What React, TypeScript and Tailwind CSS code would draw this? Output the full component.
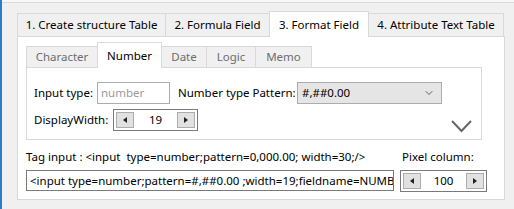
import { ChevronDown } from 'lucide-react'

function Spinner({ value, width }: { value: string; width: string }) {
  return (
    <div className={`${width} h-[22px] border border-[#7a7a7a] bg-white flex items-center justify-between px-[2px]`}>
      <div className="w-[18px] h-[16px] border border-[#adadad] bg-[#e1e1e1] flex items-center justify-center">
        <svg width="4" height="6" viewBox="0 0 4 6"><path d="M4 0 L0 3 L4 6 Z" fill="#222" /></svg>
      </div>
      <span className="text-black">{value}</span>
      <div className="w-[18px] h-[16px] border border-[#adadad] bg-[#e1e1e1] flex items-center justify-center">
        <svg width="4" height="6" viewBox="0 0 4 6"><path d="M0 0 L4 3 L0 6 Z" fill="#222" /></svg>
      </div>
    </div>
  )
}

export default function App() {
  const outerTabs = [
    { label: '1. Create structure Table', w: 'w-[149px]' },
    { label: '2. Formula Field', w: 'w-[105px]' },
    { label: '3. Format Field', w: 'w-[100px]', active: true },
    { label: '4. Attribute Text Table', w: 'w-[136px]' },
  ]
  const innerTabs = [
    { label: 'Character', w: 'w-[72px]' },
    { label: 'Number', w: 'w-[65px]', active: true },
    { label: 'Date', w: 'w-[46px]' },
    { label: 'Logic', w: 'w-[50px]' },
    { label: 'Memo', w: 'w-[57px]' },
  ]

  return (
    <div className="w-[514px] h-[209px] bg-[#f0f0f0] border-l-2 border-[#2f7bc4] overflow-hidden font-['Noto_Sans',sans-serif] text-[11.5px] text-black">
      <div className="h-[2px] bg-[#f8f8f8]" />
      <div className="border-t border-[#dadada]">
        {/* Outer tabs */}
        <div className="flex items-end h-[25px] ml-[15px] mt-[8px]">
          {outerTabs.map((t, i) => (
            <div
              key={t.label}
              className={`${t.w} ${i > 0 ? '-ml-px' : ''} ${
                t.active
                  ? 'h-[26px] -mb-px bg-white border border-b-0 border-[#d9d9d9] relative z-10'
                  : 'h-[23px] bg-[#f0f0f0] border border-b-0 border-[#d9d9d9]'
              } flex items-center justify-center whitespace-nowrap`}
            >
              {t.label}
            </div>
          ))}
        </div>

        {/* Outer pane */}
        <div className="ml-[15px] w-[488px] h-[164px] bg-white border border-[#d9d9d9] px-[8px] pt-[5px]">
          {/* Inner tabs */}
          <div className="flex items-end h-[25px]">
            {innerTabs.map((t, i) => (
              <div
                key={t.label}
                className={`${t.w} ${i > 0 ? '-ml-px' : ''} ${
                  t.active
                    ? 'h-[26px] -mb-px bg-white border border-b-0 border-[#d9d9d9] text-black relative z-10'
                    : 'h-[21px] bg-[#f0f0f0] border border-b-0 border-[#d9d9d9] text-[#6d6d6d]'
                } flex items-center justify-center whitespace-nowrap`}
              >
                {t.label}
              </div>
            ))}
          </div>

          {/* Inner pane */}
          <div className="w-[456px] h-[73px] border border-[#d9d9d9] bg-white pt-[14px] px-[7px] relative">
            <div className="flex items-center h-[22px]">
              <span className="w-[63px]">Input type:</span>
              <div className="w-[73px] h-[22px] border border-[#acacac] flex items-center px-[3px] text-[#9a9a9a]">number</div>
              <span className="ml-[8px] w-[119px] whitespace-nowrap">Number type Pattern:</span>
              <div className="w-[145px] h-[22px] border border-[#acacac] bg-[#e5e5e5] flex items-center justify-between px-[4px]">
                <span>#,##0.00</span>
                <ChevronDown size={12} strokeWidth={1.5} className="text-[#333] mr-[2px]" />
              </div>
            </div>
            <div className="flex items-center h-[22px] mt-[5px]">
              <span className="w-[79px]">DisplayWidth:</span>
              <Spinner value="19" width="w-[85px]" />
            </div>
            <svg className="absolute left-[424px] top-[52px]" width="21" height="13" viewBox="0 0 21 13">
              <path d="M1 1 L10.5 11 L20 1" fill="none" stroke="#666" strokeWidth="2" />
            </svg>
          </div>

          {/* Tag input */}
          <div className="flex mt-[9px]">
            <div className="w-[374px]">
              <div className="h-[16px] leading-[16px] whitespace-nowrap">Tag input : &lt;input&nbsp; type=number;pattern=0,000.00; width=30;/&gt;</div>
              <div className="mt-[5px] w-[368px] h-[21px] border border-[#7a7a7a] flex items-center px-[3px] whitespace-nowrap overflow-hidden">
                &lt;input type=number;pattern=#,##0.00 ;width=19;fieldname=NUMB
              </div>
            </div>
            <div>
              <div className="h-[16px] leading-[16px] whitespace-nowrap ml-[2px]">Pixel column:</div>
              <div className="mt-[5px]">
                <Spinner value="100" width="w-[87px]" />
              </div>
            </div>
          </div>
        </div>
      </div>
    </div>
  )
}
